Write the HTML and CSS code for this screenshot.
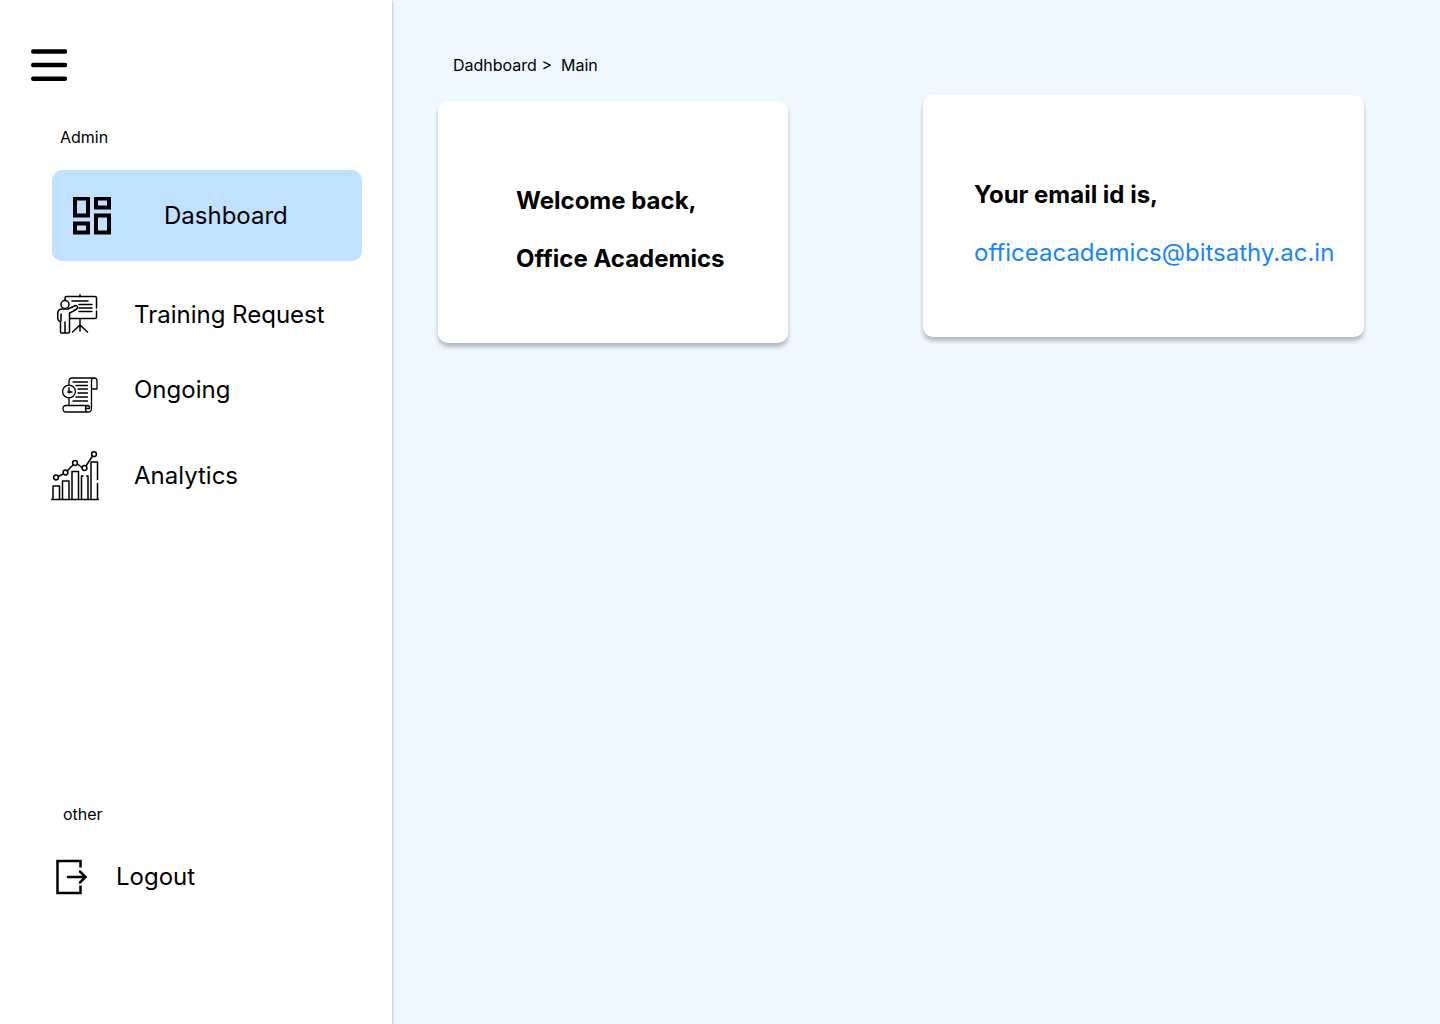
FILE: index.html
```html
<!DOCTYPE html>
<html lang="en">
<head>
<meta charset="utf-8">
<meta name="viewport" content="width=device-width, initial-scale=1">
<title>Dashboard</title>
<link rel="stylesheet" href="styles.css">
</head>
<body>
<div class="app">
  <aside class="sidebar">
    <button class="menu-button" type="button" aria-label="Menu">
      <svg width="36" height="32" viewBox="0 0 36 32" fill="none" stroke="#000" stroke-width="4.400" stroke-linecap="round"><path d="M2.200 2.500H34M2.200 16H34M2.200 29.700H34"/></svg>
    </button>
    <h2 class="section-label">Admin</h2>
    <nav class="nav">
      <a class="nav-item nav-item-active" href="#dashboard" aria-current="page">
        <svg width="38" height="38" viewBox="0 0 38 38" fill="none" stroke="#000" stroke-width="4"><path d="M2 1.500H15V18.500H2ZM23 1.500H36V10.500H23ZM2 26.500H15V35.500H2ZM23 18.500H36V35.500H23Z"/></svg>
        <span>Dashboard</span>
      </a>
      <a class="nav-item" href="#training">
        <span class="nav-icon">
          <svg width="42" height="42" viewBox="1 1 42 42" fill="none" stroke="#000" stroke-width="1.500" stroke-linecap="round" stroke-linejoin="round">
            <path d="M24 4V1.800M9 7V5Q9 3.500 10.500 3.500H39Q40.500 3.500 40.500 5V15M40.500 18V24Q40.500 25.500 39 25.500H14"/>
            <circle cx="9" cy="11.500" r="4"/>
            <path d="M16 8H32M23 11.500H36M23 15H36M23 18.500H36"/>
            <path d="M4.500 39V29Q1.700 28 1.700 25V21Q1.700 16 6 16H12L19.500 12.500Q22 12.500 21.500 15Q20 17 13.500 20V39Q13.500 40 12 40H10.500Q9 40 9 39V29M5 21V28M4.500 39Q4.500 40 5.500 40H8Q9 40 9 39"/>
            <path d="M24 26V38M24 32L16.500 39M24 32L31.500 39"/>
          </svg>
        </span>
        <span>Training Request</span>
      </a>
      <a class="nav-item nav-item-top" href="#ongoing">
        <span class="nav-icon">
          <svg width="36" height="36" viewBox="0 0 36 36" fill="none" stroke="#000" stroke-width="1.300" stroke-linecap="round" stroke-linejoin="round">
            <path d="M7 7.500V4Q7 1 10 1H32Q35 1 35 4V12H29.500M29.500 29V4Q29.500 1 32 1M7 21.500V28.500"/>
            <circle cx="7" cy="14.500" r="6.400"/>
            <path d="M7 10.500V13.500M8 15H10"/><circle cx="7" cy="14.800" r="1"/>
            <path d="M11 5H25.500M14 8.500H25.500M16 12H25.500M16 16H25.500M14 20H25.500M11 24H25.500"/>
            <path d="M26 28.500H4Q1 28.500 1 31.500Q1 35 4 35H26Q29.500 35 29.500 31.500V29M26 28.500Q23.500 28.500 23.500 31.500Q23.500 35 26 35M26 28.500Q28 29 27.500 31.500H24"/>
          </svg>
        </span>
        <span>Ongoing</span>
      </a>
      <a class="nav-item" href="#analytics">
        <span class="nav-icon">
          <svg width="48" height="50" viewBox="0 0 48 50" fill="none" stroke="#000" stroke-width="1.500" stroke-linecap="round" stroke-linejoin="round">
            <path d="M0.500 48.500H47.500M2 48.500V35H8.500V48.500M11.500 48.500V30H18V48.500M21 48.500V20.500H27.500V48.500M30.500 48.500V25H32M35.500 25H37V48.500M40 48.500V11H46.500V28.500M46.500 32.500V48.500"/>
            <path d="M7 25.500L12.500 23M16 20L22 14M26.500 13L31 16.500M35 15L41.500 5"/>
            <circle cx="5" cy="26.500" r="2.400"/><circle cx="14.500" cy="21.500" r="2.400"/><circle cx="24" cy="12" r="2.400"/><circle cx="33.500" cy="17" r="2.400"/><circle cx="43" cy="3.200" r="2.400"/>
          </svg>
        </span>
        <span>Analytics</span>
      </a>
    </nav>
    <div class="sidebar-footer">
      <h2 class="section-label">other</h2>
      <a class="logout" href="#logout">
        <svg width="32" height="36" viewBox="0 0 32 36" fill="none" stroke="#000" stroke-width="2.500"><path d="M24.500 8.500V2H1.500V34H24.500V26.500"/><path d="M12 18H29M24 12.500L29.500 18L24 23.500" stroke-linecap="round"/></svg>
        <span>Logout</span>
      </a>
    </div>
  </aside>
  <main class="main">
    <nav class="breadcrumb" aria-label="Breadcrumb">Dadhboard &gt;&nbsp; Main</nav>
    <div class="cards">
      <section class="card card-welcome">
        <p>Welcome back,</p>
        <p>Office Academics</p>
      </section>
      <section class="card card-email">
        <p>Your email id is,</p>
        <a class="email" href="mailto:officeacademics@bitsathy.ac.in">officeacademics@bitsathy.ac.in</a>
      </section>
    </div>
  </main>
</div>
</body>
</html>
```

FILE: styles.css
```css
* {
  box-sizing: border-box;
}

body {
  margin: 0;
  font-family: Inter, "Liberation Sans", sans-serif;
  font-size: 24px;
  line-height: 30px;
  color: #000;
  background: #eff7ff;
}

a {
  color: inherit;
  text-decoration: none;
}

p {
  margin: 0;
}

svg {
  display: block;
  flex: none;
}

.app {
  display: flex;
  min-height: 100vh;
}

.sidebar {
  display: flex;
  flex-direction: column;
  flex: none;
  width: 392px;
  padding: 49px 30px 129px 31px;
  background: #fff;
  box-shadow: 0 1px 3px rgba(0, 0, 0, 0.35);
}

.menu-button {
  align-self: flex-start;
  padding: 0;
  border: 0;
  background: none;
  cursor: pointer;
}

.section-label {
  margin: 0;
  font-size: 16px;
  font-weight: 400;
  line-height: 20px;
}

.sidebar > .section-label {
  margin: 46px 0 23px 29px;
}

.nav {
  display: flex;
  flex-direction: column;
  margin-left: 20px;
}

.nav-item {
  display: flex;
  align-items: center;
  gap: 35px;
  min-height: 50px;
}

.nav-item + .nav-item {
  margin-top: 29px;
}

.nav-item-active {
  gap: 53px;
  min-height: 91px;
  margin-left: 1px;
  padding-left: 21px;
  border-radius: 10px;
  background: #c0e1ff;
}

.nav-item-top {
  align-items: flex-start;
}

.nav-item + .nav-item-top {
  margin-top: 35px;
}

.nav-item-top .nav-icon {
  padding: 2px 1px 0 0;
}

.nav-item-top + .nav-item {
  margin-top: 26px;
}

.nav-icon {
  display: flex;
  justify-content: flex-end;
  width: 48px;
}

.sidebar-footer {
  margin-top: auto;
  padding-left: 25px;
}

.sidebar-footer .section-label {
  padding-left: 7px;
}

.logout {
  display: flex;
  align-items: center;
  gap: 28px;
  margin-top: 35px;
}

.main {
  flex: 1;
  min-width: 0;
  padding: 55px 76px 55px 46px;
}

.breadcrumb {
  padding-left: 15px;
  font-size: 16px;
  line-height: 20px;
}

.cards {
  display: grid;
  grid-template-columns: 350fr 441fr;
  align-items: start;
  gap: 135px;
  margin-top: 20px;
}

.card {
  display: flex;
  flex-direction: column;
  gap: 28px;
  min-height: 242px;
  padding-top: 85px;
  border-radius: 10px;
  background: #fff;
  box-shadow: 0 4px 4px rgba(0, 0, 0, 0.25);
  font-weight: 700;
}

.card-welcome {
  margin-top: 6px;
  padding-left: 78px;
}

.card-email {
  padding-left: 51px;
}

.email {
  font-weight: 400;
  color: #1785ff;
}
```
